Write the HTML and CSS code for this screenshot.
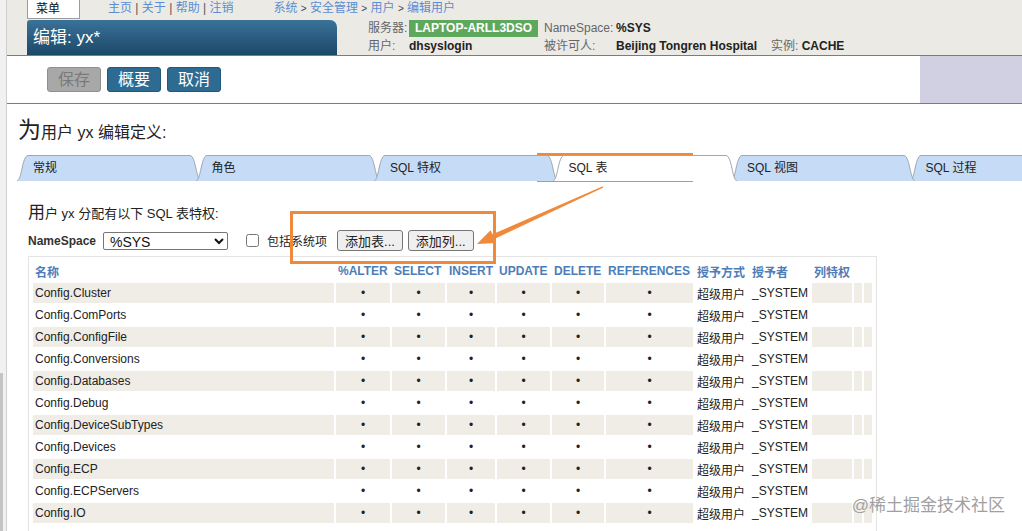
FILE: index.html
```html
<!DOCTYPE html>
<html lang="zh-cn">
<head>
<title>编辑用户</title>
<meta charset="utf-8">
<link rel="stylesheet" href="styles.css">
</head>
<body>
<div class="frame">
    <div class="edge"><div class="thumb"></div></div>

    <div class="page">
        <div class="top">
            <div class="top-row">
                <span class="menu">菜单</span>
                <span class="links"><a>主页</a> | <a>关于</a> | <a>帮助</a> | <a>注销</a></span>
                <span class="crumbs"><a>系统</a> <i>&gt;</i> <a>安全管理</a> <i>&gt;</i> <a>用户</a> <i>&gt;</i> <a>编辑用户</a></span>
            </div>
            <div class="top-main">
                <div class="title-box">编辑: yx*</div>
                <div class="info">
                    <span class="lbl">服务器:</span>
                    <span><b class="badge">LAPTOP-ARLL3DSO</b></span>
                    <span class="lbl">NameSpace:</span>
                    <span class="val">%SYS</span>
                    <span></span>

                    <span class="lbl">用户:</span>
                    <span class="val">dhsyslogin</span>
                    <span class="lbl">被许可人:</span>
                    <span class="val">Beijing Tongren Hospital</span>
                    <span><span class="lbl">实例:</span> <span class="val">CACHE</span></span>
                </div>
            </div>
        </div>

        <div class="band">
            <div class="actions">
                <button class="btn off">保存</button>
                <button class="btn">概要</button>
                <button class="btn">取消</button>
            </div>
            <div class="side"></div>
        </div>

        <div class="main">
            <h1 class="head"><big>为</big>用户 yx 编辑定义:</h1>

            <div class="tabs">
                <div class="tab"><svg class="tab-bg" viewBox="0 0 184 26" preserveAspectRatio="none"><path class="fill" d="M0,26 C5,25 5,1 11,0.5 L173,0.5 C179,1 179,25 184,26 Z"/><path class="line" d="M0,26 C5,25 5,1 11,0.5 L173,0.5 C179,1 179,25 184,26"/></svg><span>常规</span></div>
                <div class="tab"><svg class="tab-bg" viewBox="0 0 184 26" preserveAspectRatio="none"><path class="fill" d="M0,26 C5,25 5,1 11,0.5 L173,0.5 C179,1 179,25 184,26 Z"/><path class="line" d="M0,26 C5,25 5,1 11,0.5 L173,0.5 C179,1 179,25 184,26"/></svg><span>角色</span></div>
                <div class="tab"><svg class="tab-bg" viewBox="0 0 184 26" preserveAspectRatio="none"><path class="fill" d="M0,26 C5,25 5,1 11,0.5 L173,0.5 C179,1 179,25 184,26 Z"/><path class="line" d="M0,26 C5,25 5,1 11,0.5 L173,0.5 C179,1 179,25 184,26"/></svg><span>SQL 特权</span></div>
                <div class="tab on"><svg class="tab-bg" viewBox="0 0 184 26" preserveAspectRatio="none"><path class="fill" d="M0,26 C5,25 5,1 11,0.5 L173,0.5 C179,1 179,25 184,26 Z"/><path class="line" d="M0,26 C5,25 5,1 11,0.5 L173,0.5 C179,1 179,25 184,26"/></svg><span>SQL 表</span></div>
                <div class="tab"><svg class="tab-bg" viewBox="0 0 184 26" preserveAspectRatio="none"><path class="fill" d="M0,26 C5,25 5,1 11,0.5 L173,0.5 C179,1 179,25 184,26 Z"/><path class="line" d="M0,26 C5,25 5,1 11,0.5 L173,0.5 C179,1 179,25 184,26"/></svg><span>SQL 视图</span></div>
                <div class="tab"><svg class="tab-bg" viewBox="0 0 184 26" preserveAspectRatio="none"><path class="fill" d="M0,26 C5,25 5,1 11,0.5 L173,0.5 C179,1 179,25 184,26 Z"/><path class="line" d="M0,26 C5,25 5,1 11,0.5 L173,0.5 C179,1 179,25 184,26"/></svg><span>SQL 过程</span></div>
            </div>

            <div class="panel">
                <h2 class="sub"><big>用</big>户 yx 分配有以下 SQL 表特权:</h2>

                <div class="tools">
                    <label class="ns">NameSpace</label>
                    <select class="ns-select"><option>%SYS</option></select>
                    <input type="checkbox" class="chk">
                    <span class="chk-txt">包括系统项</span>
                    <button class="add">添加表...</button>
                    <button class="add">添加列...</button>
                </div>

                <div class="grid-wrap">
                    <table class="grid">
                        <colgroup>
                            <col style="width:301px"><col style="width:54px"><col style="width:53px"><col style="width:48px">
                            <col style="width:53px"><col style="width:52px"><col style="width:87px"><col style="width:53px">
                            <col style="width:60px"><col style="width:40px"><col style="width:8px"><col style="width:8px">
                        </colgroup>
                        <tr>
                            <th>名称</th><th>%ALTER</th><th>SELECT</th><th>INSERT</th><th>UPDATE</th><th>DELETE</th><th>REFERENCES</th><th>授予方式</th><th>授予者</th><th>列特权</th><th></th><th></th>
                        </tr>
                        <tr class="odd"><td>Config.Cluster</td><td class="dot">•</td><td class="dot">•</td><td class="dot">•</td><td class="dot">•</td><td class="dot">•</td><td class="dot">•</td><td class="plain">超级用户</td><td class="plain">_SYSTEM</td><td></td><td></td><td></td></tr>
                        <tr><td>Config.ComPorts</td><td class="dot">•</td><td class="dot">•</td><td class="dot">•</td><td class="dot">•</td><td class="dot">•</td><td class="dot">•</td><td class="plain">超级用户</td><td class="plain">_SYSTEM</td><td></td><td></td><td></td></tr>
                        <tr class="odd"><td>Config.ConfigFile</td><td class="dot">•</td><td class="dot">•</td><td class="dot">•</td><td class="dot">•</td><td class="dot">•</td><td class="dot">•</td><td class="plain">超级用户</td><td class="plain">_SYSTEM</td><td></td><td></td><td></td></tr>
                        <tr><td>Config.Conversions</td><td class="dot">•</td><td class="dot">•</td><td class="dot">•</td><td class="dot">•</td><td class="dot">•</td><td class="dot">•</td><td class="plain">超级用户</td><td class="plain">_SYSTEM</td><td></td><td></td><td></td></tr>
                        <tr class="odd"><td>Config.Databases</td><td class="dot">•</td><td class="dot">•</td><td class="dot">•</td><td class="dot">•</td><td class="dot">•</td><td class="dot">•</td><td class="plain">超级用户</td><td class="plain">_SYSTEM</td><td></td><td></td><td></td></tr>
                        <tr><td>Config.Debug</td><td class="dot">•</td><td class="dot">•</td><td class="dot">•</td><td class="dot">•</td><td class="dot">•</td><td class="dot">•</td><td class="plain">超级用户</td><td class="plain">_SYSTEM</td><td></td><td></td><td></td></tr>
                        <tr class="odd"><td>Config.DeviceSubTypes</td><td class="dot">•</td><td class="dot">•</td><td class="dot">•</td><td class="dot">•</td><td class="dot">•</td><td class="dot">•</td><td class="plain">超级用户</td><td class="plain">_SYSTEM</td><td></td><td></td><td></td></tr>
                        <tr><td>Config.Devices</td><td class="dot">•</td><td class="dot">•</td><td class="dot">•</td><td class="dot">•</td><td class="dot">•</td><td class="dot">•</td><td class="plain">超级用户</td><td class="plain">_SYSTEM</td><td></td><td></td><td></td></tr>
                        <tr class="odd"><td>Config.ECP</td><td class="dot">•</td><td class="dot">•</td><td class="dot">•</td><td class="dot">•</td><td class="dot">•</td><td class="dot">•</td><td class="plain">超级用户</td><td class="plain">_SYSTEM</td><td></td><td></td><td></td></tr>
                        <tr><td>Config.ECPServers</td><td class="dot">•</td><td class="dot">•</td><td class="dot">•</td><td class="dot">•</td><td class="dot">•</td><td class="dot">•</td><td class="plain">超级用户</td><td class="plain">_SYSTEM</td><td></td><td></td><td></td></tr>
                        <tr class="odd"><td>Config.IO</td><td class="dot">•</td><td class="dot">•</td><td class="dot">•</td><td class="dot">•</td><td class="dot">•</td><td class="dot">•</td><td class="plain">超级用户</td><td class="plain">_SYSTEM</td><td></td><td></td><td></td></tr>
                    </table>
                </div>
            </div>
        </div>
    </div>

    <!-- 标注层 -->
    <svg class="marks" width="1022" height="531" viewBox="0 0 1022 531">
        <rect x="538.5" y="154.5" width="153" height="26" />
        <rect x="291.5" y="212.5" width="203" height="50" />
        <polygon points="602.8,186.3 492.4,234.3 490.5,230.2 477,244 496.3,243 494.4,238.9 603.4,187.6" />
    </svg>
    <div class="wm">@稀土掘金技术社区</div>
</div>
</body>
</html>
```

FILE: styles.css
```css
html,body{margin: 0;padding: 0;height: 100%;overflow: hidden;}
body{font-family: "Liberation Sans","Noto Sans CJK SC",sans-serif;font-size: 12px;color: #222;background: #fff;}
h1,h2{margin: 0;font-weight: normal;}
big{font-size: inherit;}

.frame{display: flex;height: 531px;position: relative;overflow: hidden;}
.edge{width: 6px;flex-shrink: 0;background: #f1f1f1;border-right: 1px solid #d0d0d0;display: flex;flex-direction: column;justify-content: flex-end;}
.edge .thumb{width: 3px;height: 158px;background: #c4c4c4;}
.page{flex: 1;min-width: 0;}

/* 顶部 */
.top{height: 55px;background: #ebeae5;border-bottom: 1px solid #7c7c7c;padding-left: 20px;}
.top-row{display: flex;height: 20px;line-height: 17px;}
.menu{width: 43px;height: 18px;margin-top: -1px;padding-left: 8px;background: #fff;border: 1px solid #9c9c9c;line-height: 19px;color: #111;}
.links{margin-left: 28px;color: #555;}
.links a,.crumbs a{color: #5b8dd2;}
.crumbs{margin-left: 40px;color: #444;}
.crumbs i{font-style: normal;font-size: 10px;}
.top-main{display: flex;}
.title-box{width: 304px;height: 35px;padding-left: 6px;line-height: 35px;font-size: 17px;color: #fff;border-radius: 3px 7px 0 0;background: linear-gradient(#3a7299,#1c4868);}
.info{margin: -1px 0 0 31px;display: grid;grid-template-columns: 41px 135px 72px 155px auto;grid-template-rows: 18px 17px;align-items: center;line-height: 16px;}
.lbl{color: #666;}
.val{font-weight: bold;color: #222;}
.badge{display: inline-block;height: 17px;line-height: 17px;padding: 0 6px;background: #5ea85d;color: #fff;}

/* 按钮条 */
.band{height: 47px;border-bottom: 1px solid #7c7c7c;display: flex;justify-content: space-between;}
.actions{display: flex;gap: 6px;padding: 11px 0 0 40px;}
.btn{width: 54px;height: 25px;padding: 0;border: 1px solid #22587a;border-radius: 3px;background: #2e6b92;color: #fff;font-family: inherit;font-size: 16px;line-height: 22px;}
.btn.off{background: #a8a8a8;border-color: #8f8f8f;color: #7a7a7a;}
.side{width: 102px;background: #d1d0e2;}

/* 主体 */
.main{padding: 16px 0 0 11px;}
.head{height: 26px;font-size: 16px;line-height: 26px;color: #222;}
.head big{font-size: 23px;line-height: 20px;}

.tabs{display: flex;height: 26px;margin: 9px 0 0 -1px;overflow: hidden;}
.tab{width: 184px;height: 26px;flex-shrink: 0;margin-left: -5.5px;position: relative;line-height: 26px;}
.tab:first-child{margin-left: 0;}
.tab-bg{position: absolute;left: 0;top: 0;width: 100%;height: 100%;}
.tab-bg .fill{fill: #c6dbf5;}
.tab-bg .line{fill: none;stroke: #9ea7b3;stroke-width: 1;}
.tab span{position: relative;padding-left: 16px;color: #222;}
.tab.on .fill{fill: #fff;}
.tab:nth-child(1){z-index: 1;}
.tab:nth-child(2){z-index: 2;}
.tab:nth-child(3){z-index: 3;}
.tab:nth-child(4){z-index: 6;}
.tab:nth-child(5){z-index: 5;}
.tab:nth-child(6){z-index: 4;}

.panel{margin-left: 10px;}
.sub{height: 20px;margin-top: 23px;font-size: 13px;line-height: 20px;color: #222;}
.sub big{font-size: 17px;line-height: 16px;}

.tools{display: flex;align-items: center;height: 23px;margin-top: 5px;}
.ns{width: 75px;font-weight: bold;font-size: 12px;color: #333;}
.ns-select{width: 125px;height: 18px;padding: 0 0 0 2px;font-family: "Liberation Sans",sans-serif;font-size: 14px;color: #111;border: 1px solid #767676;border-radius: 2px;background: #fff;}
.chk{width: 13px;height: 13px;margin: 0 0 0 18px;}
.chk-txt{margin-left: 8px;}
.add{height: 21px;margin-left: 10px;padding: 0 7px;font-family: inherit;font-size: 13px;color: #222;background: #efefef;border: 1px solid #767676;border-radius: 3px;}
.add + .add{margin-left: 5px;}

.grid-wrap{width: 843px;margin-top: 4px;padding: 2px 2px 12px;border: 1px solid #e4e4e4;background: #fff;}
.grid{width: 843px;table-layout: fixed;border-collapse: separate;border-spacing: 2px;}
.grid th,.grid td{height: 20px;padding: 0 2px;white-space: nowrap;overflow: hidden;}
.grid th{text-align: left;font-weight: bold;color: #4d7db8;}
.grid td{color: #222;}
.grid td.dot{text-align: center;}
.grid tr.odd td{background: #efede6;}
.grid tr.odd td.plain{background: none;}

/* 标注 */
.marks{position: absolute;left: 0;top: 0;pointer-events: none;}
.marks rect{fill: none;stroke: #ef8a3c;stroke-width: 3;}
.marks polygon{fill: #ef8a3c;}
.wm{position: absolute;right: 17px;bottom: 15px;font-size: 17px;color: #a0a0a0;}
```
